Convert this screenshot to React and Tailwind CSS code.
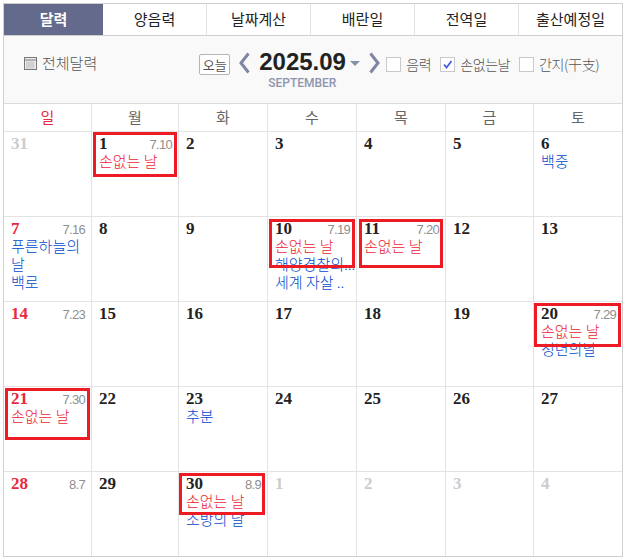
const tabs = ["달력", "양음력", "날짜계산", "배란일", "전역일", "출산예정일"];
const weekdays = ["일", "월", "화", "수", "목", "금", "토"];
const kr = "font-['Noto_Sans_CJK_KR',sans-serif]";

const colBorder = (i) => (i < 6 ? "border-r border-[#e3e3e3]" : "");

// grey = other month, red = sunday
const weeks = [
  [
    { d: 31, grey: true },
    { d: 1, lunar: "7.10", box: "left-[1px] top-0 w-[84px] h-[45px]", son: true },
    { d: 2 },
    { d: 3 },
    { d: 4 },
    { d: 5 },
    { d: 6, events: ["백중"] },
  ],
  [
    { d: 7, red: true, lunar: "7.16", events: ["푸른하늘의", "날", "백로"] },
    { d: 8 },
    { d: 9 },
    {
      d: 10,
      lunar: "7.19",
      son: true,
      box: "left-[1px] top-[2px] w-[86px] h-[49px]",
      events: ["해양경찰의...", "세계 자살 .."],
    },
    { d: 11, lunar: "7.20", son: true, box: "left-[2px] top-[2px] w-[84px] h-[49px]" },
    { d: 12 },
    { d: 13 },
  ],
  [
    { d: 14, red: true, lunar: "7.23" },
    { d: 15 },
    { d: 16 },
    { d: 17 },
    { d: 18 },
    { d: 19 },
    {
      d: 20,
      lunar: "7.29",
      son: true,
      box: "left-0 top-[1px] w-[87px] h-[44px]",
      events: ["성년의날"],
    },
  ],
  [
    { d: 21, red: true, lunar: "7.30", son: true, box: "left-[1px] top-[1px] w-[85px] h-[52px]" },
    { d: 22 },
    { d: 23, events: ["추분"] },
    { d: 24 },
    { d: 25 },
    { d: 26 },
    { d: 27 },
  ],
  [
    { d: 28, red: true, lunar: "8.7" },
    { d: 29 },
    {
      d: 30,
      lunar: "8.9",
      son: true,
      box: "left-0 top-[1px] w-[86px] h-[42px]",
      events: ["소방의 날"],
    },
    { d: 1, grey: true },
    { d: 2, grey: true },
    { d: 3, grey: true },
    { d: 4, grey: true },
  ],
];

function Arrow({ flip }) {
  return (
    <svg width="11" height="22" viewBox="0 0 11 22" className="mt-[16px] shrink-0">
      <path
        d={flip ? "M1.5 1.5 L9 11 L1.5 20.5" : "M9.5 1.5 L2 11 L9.5 20.5"}
        fill="none"
        stroke="#7f86a3"
        strokeWidth="3"
      />
    </svg>
  );
}

function Check({ label, checked }) {
  return (
    <label className="flex items-center gap-[5px]">
      <span className="flex h-[15px] w-[15px] items-center justify-center border border-[#c9c9c9] bg-white">
        {checked && (
          <svg width="11" height="11" viewBox="0 0 11 11">
            <path d="M2 5.5 L4.5 8.5 L9.5 2" fill="none" stroke="#4a5fe0" strokeWidth="1.8" />
          </svg>
        )}
      </span>
      <span className={`text-[14px] font-light tracking-[-0.4px] text-[#555] ${kr}`}>{label}</span>
    </label>
  );
}

function DayCell({ day, col }) {
  let numColor = "text-[#222]";
  if (day.grey) numColor = "text-[#ccc]";
  if (day.red) numColor = "text-[#e8283c]";

  return (
    <div className={`relative h-[84px] px-[7px] pt-[3px] ${colBorder(col)}`}>
      <div className="flex h-[17px] items-center justify-between">
        <span className={`font-['Liberation_Serif',serif] text-[17px] font-bold ${numColor}`}>{day.d}</span>
        {day.lunar && (
          <span className="-mr-[1px] mt-[2px] font-['Liberation_Sans',sans-serif] text-[13px] tracking-[-0.7px] text-[#8f8f8f]">
            {day.lunar}
          </span>
        )}
      </div>
      <div className={`whitespace-nowrap text-[15px] font-light leading-[18px] ${kr}`}>
        {day.son && <div className="text-[#ee1c34]">손없는 날</div>}
        {day.events?.map((e) => (
          <div key={e} className="text-[#0048cc]">
            {e}
          </div>
        ))}
      </div>
      {day.box && <div className={`absolute border-[3px] border-[#ed1c24] ${day.box}`} />}
    </div>
  );
}

export default function App() {
  return (
    <div className="ml-[3px] mt-[3px] w-[620px] border border-[#cfcfcf] bg-white">
      <div className="grid h-[32px] grid-cols-[99px_104px_104px_104px_104px_103px] border-b border-[#cfcfcf]">
        {tabs.map((t, i) => (
          <div
            key={t}
            className={`flex items-center justify-center text-[15px] ${kr} ${
              i === 0 ? "bg-[#636a8b] font-bold text-white" : "text-[#222]"
            } ${i > 0 && i < 5 ? "border-r border-[#e3e3e3]" : ""}`}
          >
            {t}
          </div>
        ))}
      </div>

      <div className="flex h-[68px] items-start border-b border-[#dcdcdc] bg-[#f9f9f9]">
        <div className="ml-[20px] mt-[16px] flex items-center gap-[5px]">
          <svg width="13" height="13" viewBox="0 0 13 13">
            <rect x="0.5" y="0.5" width="12" height="12" fill="#eee" stroke="#777" />
            <path d="M0 3h13" stroke="#777" />
            <path d="M3 4v8M5 4v8M7 4v8M9 4v8M2 6h9M2 8h9M2 10h9" stroke="#bbb" strokeWidth="0.7" />
          </svg>
          <span className={`text-[15px] font-light text-[#555] ${kr}`}>전체달력</span>
        </div>
        <button
          className={`ml-[102px] mt-[18px] h-[21px] w-[31px] shrink-0 rounded-[2px] border border-[#b5b5b5] bg-white text-[13px] leading-none text-[#555] ${kr}`}
        >
          오늘
        </button>
        <div className="ml-[9px] flex shrink-0">
          <Arrow />
        </div>
        <div className="ml-[9px] mt-[11px] flex w-[110px] shrink-0 flex-col items-start">
          <div className="flex items-center">
            <span className="font-['Liberation_Sans',sans-serif] text-[24px] font-bold leading-[30px] text-[#222]">
              2025.09
            </span>
            <span className="ml-[4px] mt-[3px] h-0 w-0 border-x-[5px] border-t-[5px] border-x-transparent border-t-[#8a8fa8]" />
          </div>
          <span className="ml-[9px] font-['Roboto',sans-serif] text-[12px] font-medium leading-[13px] text-[#8f95ae]">
            SEPTEMBER
          </span>
        </div>
        <Arrow flip />
        <div className="ml-[6px] mt-[18px] flex shrink-0 items-center gap-[9px]">
          <Check label="음력" />
          <Check label="손없는날" checked />
          <Check label="간지(干支)" />
        </div>
      </div>

      <div className="grid grid-cols-[88px_87px_89px_89px_89px_88px_88px] border-b border-[#e3e3e3]">
        {weekdays.map((w, i) => (
          <div
            key={w}
            className={`flex h-[27px] items-center justify-center text-[15px] ${kr} ${
              i === 0 ? "text-[#e8283c]" : "text-[#666]"
            } ${colBorder(i)}`}
          >
            {w}
          </div>
        ))}
      </div>

      {weeks.map((week, r) => (
        <div
          key={r}
          className={`grid grid-cols-[88px_87px_89px_89px_89px_88px_88px] ${r < 4 ? "border-b border-[#e3e3e3]" : ""}`}
        >
          {week.map((day, c) => (
            <DayCell key={c} day={day} col={c} />
          ))}
        </div>
      ))}
    </div>
  );
}
